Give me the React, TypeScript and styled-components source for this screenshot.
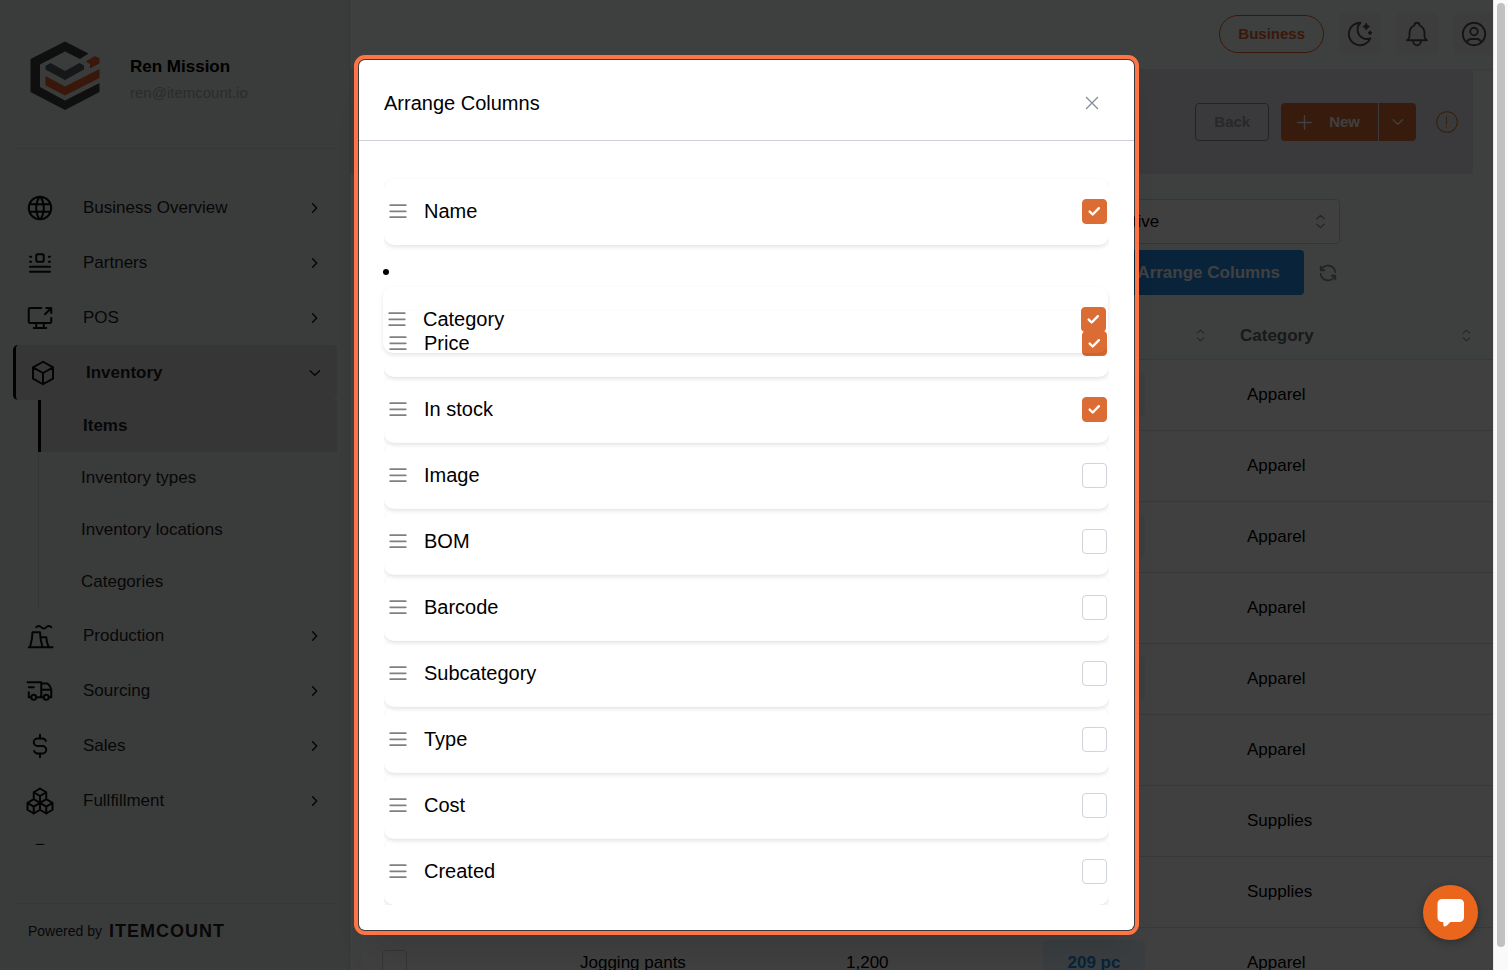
import React from 'react';
import styled, { createGlobalStyle } from 'styled-components';

const GlobalStyle = createGlobalStyle`
  *, *::before, *::after { box-sizing: border-box; }
  body {
    margin: 0;
    overflow: hidden;
    font-family: "Liberation Sans", Arial, Helvetica, sans-serif;
    font-size: 17px;
    line-height: 24px;
    color: #1c1f22;
  }
  button, input, select { font: inherit; color: inherit; }
  button { cursor: pointer; }
  a { color: inherit; text-decoration: none; }
  ul { list-style: none; margin: 0; padding: 0; }
  h1, h2, p { margin: 0; }
`;

/* ---------- icons ---------- */

type IconProps = { size?: number; stroke?: number; children: React.ReactNode };

const Svg = styled.svg`
  display: block;
  flex: none;
  fill: none;
  stroke: currentColor;
  stroke-linecap: round;
  stroke-linejoin: round;
`;

const Icon = ({ size = 30, stroke = 1.5, children }: IconProps) => (
  <Svg width={size} height={size} viewBox="0 0 24 24" strokeWidth={stroke} aria-hidden="true">
    {children}
  </Svg>
);

const paths = {
  world: 'M3 12a9 9 0 1 0 18 0a9 9 0 0 0 -18 0M3.6 9h16.8M3.6 15h16.8M11.5 3a17 17 0 0 0 0 18M12.5 3a17 17 0 0 1 0 18',
  partners:
    'M9 6a1 1 0 0 1 1 -1h4a1 1 0 0 1 1 1v4a1 1 0 0 1 -1 1h-4a1 1 0 0 1 -1 -1zM4 7h1M4 11h1M19 7h1M19 11h1M4 15h16M4 19h16',
  pos: 'M21 12v3a1 1 0 0 1 -1 1h-16a1 1 0 0 1 -1 -1v-10a1 1 0 0 1 1 -1h9M7 20h10M9 16v4M15 16v4M17 4h4v4M16 9l5 -5',
  box: 'M12 3l8 4.5v9l-8 4.5l-8 -4.5v-9l8 -4.5M12 12l8 -4.5M12 12v9M12 12l-8 -4.5',
  factory:
    'M4 21c1.147 -4.02 1.983 -8.027 2 -12h6c.017 3.973 .853 7.98 2 12M12.5 13h4.5c.025 2.612 .894 5.296 2 8M9 5a2.4 2.4 0 0 1 2 -1a2.4 2.4 0 0 1 2 1a2.4 2.4 0 0 0 2 1a2.4 2.4 0 0 0 2 -1a2.4 2.4 0 0 1 2 -1a2.4 2.4 0 0 1 2 1M3 21h19',
  truck:
    'M5 17a2 2 0 1 0 4 0a2 2 0 1 0 -4 0M15 17a2 2 0 1 0 4 0a2 2 0 1 0 -4 0M5 17h-2v-4m-1 -8h11v12m-4 0h6m4 0h2v-6h-8m0 -5h5c1.500 1.200 2.600 3 3 5M3 9h4',
  dollar: 'M16.7 8a3 3 0 0 0 -2.7 -2h-4a3 3 0 0 0 0 6h4a3 3 0 0 1 0 6h-4a3 3 0 0 1 -2.7 -2M12 3v3M12 18v3',
  packages:
    'M7 16.5l-5 -3l5 -3l5 3v5.5l-5 3zM2 13.5v5.5l5 3M7 16.545l5 -3.03M17 16.5l-5 -3l5 -3l5 3v5.5l-5 3zM12 19l5 3M17 16.5l5 -3M12 13.5v-5.5l-5 -3l5 -3l5 3v5.5M7 5.03v5.455M12 8l5 -3',
  coin: 'M3 12a9 9 0 1 0 18 0a9 9 0 0 0 -18 0',
  moon: 'M12 3c.132 0 .263 0 .393 0a7.5 7.5 0 0 0 7.92 12.446a9 9 0 1 1 -8.313 -12.454zM17 4a2 2 0 0 0 2 2a2 2 0 0 0 -2 2a2 2 0 0 0 -2 -2a2 2 0 0 0 2 -2M19 11h2m-1 -1v2',
  bell: 'M10 5a2 2 0 0 1 4 0a7 7 0 0 1 4 6v3a4 4 0 0 0 2 3h-16a4 4 0 0 0 2 -3v-3a7 7 0 0 1 4 -6M9 17v1a3 3 0 0 0 6 0v-1',
  user: 'M3 12a9 9 0 1 0 18 0a9 9 0 1 0 -18 0M9 10a3 3 0 1 0 6 0a3 3 0 1 0 -6 0M6.168 18.849a4 4 0 0 1 3.832 -2.849h4a4 4 0 0 1 3.834 2.855',
  refresh: 'M20 11a8.1 8.1 0 0 0 -15.5 -2m-.5 -4v4h4M4 13a8.1 8.1 0 0 0 15.5 2m.5 4v-4h-4',
};

const ChevronRight = () => (
  <Svg width="12" height="12" viewBox="0 0 12 12" strokeWidth="1.3" aria-hidden="true">
    <path d="M3.6 1.7L7.700 6L3.6 10.300" />
  </Svg>
);
const ChevronDown = () => (
  <Svg width="12" height="12" viewBox="0 0 12 12" strokeWidth="1.3" aria-hidden="true">
    <path d="M1 3.8L5.800 8.300L10.600 3.8" />
  </Svg>
);
const Sorter = ({ size = 15 }: { size?: number }) => (
  <Svg width={size} height={size} viewBox="0 0 15 15" strokeWidth="1.2" aria-hidden="true">
    <path d="M3.8 4.8L7.5 1.4L11.2 4.8M3.8 10.2L7.5 13.6L11.2 10.2" />
  </Svg>
);

/* ---------- shell ---------- */

const Shell = styled.div`
  display: grid;
  grid-template-columns: minmax(0, 1fr) 15px;
  height: 100vh;
`;
const Content = styled.div`
  position: relative;
  display: grid;
  grid-template-columns: 350px minmax(0, 1fr);
  min-height: 0;
  overflow: hidden;
  background: #f8fdfb;
`;
const ScrollTrack = styled.div`
  padding: 3px 3px 23px 3px;
  border-left: 1px solid #e8e8e8;
  background: #fafafa;
`;
const ScrollThumb = styled.div`
  width: 8px;
  height: 100%;
  border-radius: 4px;
  background: #c1c1c1;
`;

/* ---------- sidebar ---------- */

const Sidebar = styled.aside`
  display: flex;
  flex-direction: column;
  min-height: 0;
  padding: 0 12px 0 13px;
  border-right: 1px solid #d3d6d9;
  background: #e7e9ec;
`;
const Profile = styled.div`
  display: flex;
  align-items: center;
  gap: 30px;
  height: 149px;
  padding: 4px 0 0 17px;
  border-bottom: 1px solid #d6d9dc;
`;
const ProfileText = styled.div`
  padding-top: 8px;
`;
const ProfileName = styled.h2`
  font-size: 17px;
  line-height: 26px;
  color: #000;
`;
const ProfileMail = styled.p`
  font-size: 15px;
  line-height: 26px;
  color: #a9adb0;
`;
const Nav = styled.nav`
  flex: 1;
  min-height: 0;
  margin: 31px 0 58px;
  overflow: hidden;
`;
const NavLink = styled.a<{ $open?: boolean }>`
  display: flex;
  align-items: center;
  height: 55px;
  padding: 0 16px 0 12px;
  border-left: ${(p) => (p.$open ? '3px solid #000' : '0')};
  border-radius: 5px;
  background: ${(p) => (p.$open ? '#d6d8db' : 'transparent')};
  font-weight: ${(p) => (p.$open ? 700 : 400)};
  > svg { color: #0c0d0e; }
`;
const NavText = styled.span`
  flex: 1;
  padding-left: 28px;
`;
const SubList = styled.ul`
  margin-left: 25px;
`;
const SubLink = styled.a<{ $active?: boolean }>`
  display: flex;
  align-items: center;
  height: 52px;
  padding-left: 42px;
  border-left: ${(p) => (p.$active ? '3px solid #000' : '1px solid #cfd2d5')};
  background: ${(p) => (p.$active ? '#d6d8db' : 'transparent')};
  font-weight: ${(p) => (p.$active ? 700 : 400)};
`;
const Powered = styled.footer`
  display: flex;
  align-items: center;
  gap: 7px;
  height: 67px;
  padding: 0 0 12px 15px;
  border-top: 1px solid #d6d9dc;
  font-size: 14px;
`;
const Brand = styled.strong`
  font-size: 18px;
  letter-spacing: 1px;
`;

const Logo = () => (
  <svg width="70" height="70" viewBox="0 0 70 70" aria-hidden="true">
    <path d="M35 0.500L58.500 12.500L50 18L35 10.500L10 23.500V46L35 59.500L69.500 42V51L35 69L0.500 51V18Z" fill="#3c3f40" />
    <path d="M15.500 25L20.500 22L35 30L49.500 22L54 24.500V28.500L35 39L15.500 28.500Z" fill="#555b62" />
    <path d="M15.500 35L35 45.500L69.500 28V37L35 54.500L15.500 44.500Z" fill="#e2612c" />
    <path d="M55.500 20.500L65 15L69.500 17.500V22.500L60 27.500V23Z" fill="#e2612c" />
  </svg>
);

/* ---------- main ---------- */

const Main = styled.main`
  min-width: 0;
  overflow: hidden;
`;
const Topbar = styled.header`
  display: flex;
  justify-content: flex-end;
  align-items: center;
  gap: 15px;
  height: 70px;
  margin-right: -2px;
  padding-bottom: 2px;
  border-bottom: 1px solid #e4e8e8;
`;
const Pill = styled.button`
  height: 38px;
  padding: 0 18px;
  border: 1px solid #e4622c;
  border-radius: 19px;
  background: transparent;
  font-size: 15px;
  font-weight: 700;
  color: #e4622c;
`;
const Tile = styled.button`
  display: grid;
  place-items: center;
  width: 42px;
  height: 42px;
  padding: 0;
  border: 0;
  border-radius: 4px;
  background: #f3f3f3;
  color: #495057;
`;
const Band = styled.section`
  display: flex;
  justify-content: flex-end;
  align-items: center;
  height: 104px;
  margin-right: 20px;
  padding-right: 15px;
  background: #e6e8ed;
`;
const BackButton = styled.button`
  height: 38px;
  margin-right: 12px;
  padding: 0 18px;
  border: 1px solid #868c93;
  border-radius: 4px;
  background: transparent;
  font-size: 15px;
  font-weight: 700;
  color: #999fa6;
`;
const NewButton = styled.button`
  display: flex;
  align-items: center;
  gap: 17px;
  height: 38px;
  margin-right: 1px;
  padding: 0 18px 0 16px;
  border: 0;
  border-radius: 4px 0 0 4px;
  background: #db6c34;
  font-size: 15px;
  font-weight: 700;
  color: #fff;
`;
const NewMenuButton = styled.button`
  display: grid;
  place-items: center;
  width: 37px;
  height: 38px;
  margin-right: 20px;
  padding: 0;
  border: 0;
  border-radius: 0 4px 4px 0;
  background: #db6c34;
  color: #fff;
`;
const InfoButton = styled.button`
  padding: 0;
  border: 0;
  background: none;
  color: #d9822b;
`;
const Toolbar = styled.div`
  display: flex;
  flex-direction: column;
  align-items: flex-end;
  gap: 6px;
  margin: 25px 153px 18px 0;
`;
const SelectBox = styled.div`
  display: grid;
  align-items: center;
  width: 242px;
  > * { grid-area: 1 / 1; }
  > svg { justify-self: end; margin-right: 12px; color: #868e96; }
`;
const StatusSelect = styled.select`
  appearance: none;
  width: 100%;
  height: 45px;
  padding: 0 14px;
  border: 1px solid #ced4da;
  border-radius: 4px;
  background: #fff;
  color: #000;
`;
const Actions = styled.div`
  display: flex;
  align-items: center;
  gap: 12px;
`;
const ArrangeButton = styled.button`
  height: 45px;
  padding: 0 24px;
  border: 0;
  border-radius: 4px;
  background: #228be6;
  font-weight: 700;
  color: #fff;
`;
const RefreshButton = styled.button`
  display: grid;
  place-items: center;
  width: 24px;
  height: 24px;
  padding: 0;
  border: 0;
  background: none;
  color: #868e96;
`;

const TableArea = styled.div`
  padding-left: 12px;
`;
const Table = styled.table`
  width: 100%;
  border-collapse: collapse;
  table-layout: fixed;
`;
const Col = styled.col<{ $w?: number }>`
  width: ${(p) => (p.$w ? `${p.$w}px` : 'auto')};
`;
const Th = styled.th`
  height: 46px;
  padding: 0 20px 0 13px;
  border-bottom: 1px solid #dee2e6;
  text-align: left;
  color: #5f666d;
`;
const ThInner = styled.div`
  display: flex;
  align-items: center;
  justify-content: space-between;
  > svg { color: #868e96; }
`;
const Td = styled.td`
  height: 71px;
  padding: 0 20px;
  border-bottom: 1px solid #dee2e6;
  background: #fff;
  color: #000;
`;
const Badge = styled.span`
  display: flex;
  align-items: center;
  justify-content: center;
  width: 102px;
  height: 45px;
  border-radius: 6px;
  background: #e7f5ff;
  font-weight: 700;
  color: #228be6;
`;

/* ---------- modal ---------- */

const Overlay = styled.div`
  position: absolute;
  inset: 0;
  display: flex;
  justify-content: center;
  align-items: flex-start;
  padding-top: 60px;
  background: rgba(0, 0, 0, 0.75);
`;
const Modal = styled.section`
  width: 100%;
  max-width: 775px;
  border-radius: 6px;
  outline: 4px solid #ff7445;
  outline-offset: 1px;
  background: #fff;
  box-shadow: 0 1px 3px rgba(0, 0, 0, 0.05), 0 30px 30px -10px rgba(0, 0, 0, 0.1);
  color: #000;
`;
const ModalHeader = styled.header`
  display: flex;
  align-items: center;
  justify-content: space-between;
  height: 81px;
  padding: 5px 34px 0 25px;
  border-bottom: 1px solid #ced0d8;
`;
const ModalTitle = styled.h1`
  font-size: 20px;
  font-weight: 400;
`;
const CloseButton = styled.button`
  display: grid;
  place-items: center;
  width: 16px;
  height: 16px;
  padding: 0;
  border: 0;
  background: none;
  color: #868e9c;
`;
const ModalBody = styled.div`
  padding: 36px 25px 25px;
`;
const ListFrame = styled.div`
  position: relative;
`;
const ColumnList = styled.ul`
  padding-top: 2px;
  overflow: hidden;
`;
const Card = styled.div`
  display: flex;
  align-items: center;
  height: 66px;
  padding: 0 2px 2px 5px;
  border-radius: 10px;
  box-shadow: 0 2px 4px rgba(0, 0, 0, 0.11);
  font-size: 20px;
`;
const DragHandle = styled.button`
  display: grid;
  place-items: center;
  width: 18px;
  height: 18px;
  margin-right: 17px;
  padding: 0;
  border: 0;
  background: none;
  color: #808080;
  cursor: grab;
`;
const CardLabel = styled.label`
  flex: 1;
`;
const EmptySlot = styled.li`
  height: 66px;
`;
const Dragged = styled.div`
  position: absolute;
  top: 68px;
  left: -1px;
  width: 100%;
`;
const Bullet = styled.div`
  width: 6px;
  height: 6px;
  margin: 24px 0 12px;
  border-radius: 50%;
  background: #000;
`;
const CheckWrap = styled.span`
  display: grid;
  place-items: center;
  width: 25px;
  height: 25px;
  > * { grid-area: 1 / 1; }
  > svg { display: none; color: #fff; pointer-events: none; }
  > input:checked + svg { display: block; }
`;
const CheckInput = styled.input`
  appearance: none;
  width: 25px;
  height: 25px;
  margin: 0;
  border: 1px solid #ced4da;
  border-radius: 4px;
  background: #fff;
  &:checked { border-color: #db6c34; background: #db6c34; }
`;

const ChatButton = styled.button`
  position: absolute;
  right: 15px;
  bottom: 30px;
  display: grid;
  place-items: center;
  width: 55px;
  height: 55px;
  padding: 0;
  border: 0;
  border-radius: 50%;
  background: #eb661d;
  box-shadow: 0 2px 8px rgba(0, 0, 0, 0.3);
`;

const Check = ({ id, checked, label }: { id?: string; checked?: boolean; label?: string }) => (
  <CheckWrap>
    <CheckInput type="checkbox" id={id} defaultChecked={checked} aria-label={label} />
    <Svg width="13" height="11" viewBox="0 0 13 11" strokeWidth="2.4" aria-hidden="true">
      <path d="M1.700 5.600L4.700 8.500L10.900 2.200" />
    </Svg>
  </CheckWrap>
);

const ColumnCard = ({ name, checked }: { name: string; checked?: boolean }) => {
  const id = `column-${name.toLowerCase().replace(' ', '-')}`;
  return (
    <Card>
      <DragHandle type="button" aria-label={`Move ${name}`}>
        <Svg width="18" height="18" viewBox="0 0 18 18" strokeWidth="1.7" aria-hidden="true">
          <path d="M1.200 3.200H16.800M1.200 9.300H16.800M1.200 15.200H16.800" />
        </Svg>
      </DragHandle>
      <CardLabel htmlFor={id}>{name}</CardLabel>
      <Check id={id} checked={checked} />
    </Card>
  );
};

/* ---------- data ---------- */

type NavEntry = { label: string; icon: keyof typeof paths; children?: string[] };

const navEntries: NavEntry[] = [
  { label: 'Business Overview', icon: 'world' },
  { label: 'Partners', icon: 'partners' },
  { label: 'POS', icon: 'pos' },
  { label: 'Inventory', icon: 'box', children: ['Items', 'Inventory types', 'Inventory locations', 'Categories'] },
  { label: 'Production', icon: 'factory' },
  { label: 'Sourcing', icon: 'truck' },
  { label: 'Sales', icon: 'dollar' },
  { label: 'Fullfillment', icon: 'packages' },
];

type Item = { category: string; badge?: boolean; name?: string; price?: string; stock?: string };

const items: Item[] = [
  { category: 'Apparel', badge: true },
  { category: 'Apparel' },
  { category: 'Apparel', badge: true },
  { category: 'Apparel' },
  { category: 'Apparel', badge: true },
  { category: 'Apparel' },
  { category: 'Supplies' },
  { category: 'Supplies' },
  { category: 'Apparel', badge: true, name: 'Jogging pants', price: '1,200', stock: '209 pc' },
];

const columns = [
  { name: 'Name', checked: true },
  { name: 'Category', checked: true, dragging: true },
  { name: 'Price', checked: true },
  { name: 'In stock', checked: true },
  { name: 'Image' },
  { name: 'BOM' },
  { name: 'Barcode' },
  { name: 'Subcategory' },
  { name: 'Type' },
  { name: 'Cost' },
  { name: 'Created' },
];

export default function App() {
  return (
    <>
      <GlobalStyle />
      <Shell>
        <Content>
          <Sidebar>
            <Profile>
              <Logo />
              <ProfileText>
                <ProfileName>Ren Mission</ProfileName>
                <ProfileMail>ren@itemcount.io</ProfileMail>
              </ProfileText>
            </Profile>
            <Nav>
              <ul>
                {navEntries.map((entry) => (
                  <li key={entry.label}>
                    <NavLink href="#" $open={!!entry.children}>
                      <Icon stroke={1.6}>
                        <path d={paths[entry.icon]} />
                      </Icon>
                      <NavText>{entry.label}</NavText>
                      {entry.children ? <ChevronDown /> : <ChevronRight />}
                    </NavLink>
                    {entry.children && (
                      <SubList>
                        {entry.children.map((child, i) => (
                          <li key={child}>
                            <SubLink href="#" $active={i === 0}>
                              {child}
                            </SubLink>
                          </li>
                        ))}
                      </SubList>
                    )}
                  </li>
                ))}
                <li>
                  <NavLink href="#" aria-label="More">
                    <Icon stroke={1.6}>
                      <path d={paths.coin} />
                    </Icon>
                  </NavLink>
                </li>
              </ul>
            </Nav>
            <Powered>
              Powered by <Brand>ITEMCOUNT</Brand>
            </Powered>
          </Sidebar>

          <Main>
            <Topbar>
              <Pill type="button">Business</Pill>
              <Tile type="button" aria-label="Dark mode">
                <Icon><path d={paths.moon} /></Icon>
              </Tile>
              <Tile type="button" aria-label="Notifications">
                <Icon><path d={paths.bell} /></Icon>
              </Tile>
              <Tile type="button" aria-label="Account">
                <Icon><path d={paths.user} /></Icon>
              </Tile>
            </Topbar>
            <Band>
              <BackButton type="button">Back</BackButton>
              <NewButton type="button">
                <Svg width="15" height="15" viewBox="0 0 15 15" strokeWidth="1.4" aria-hidden="true">
                  <path d="M7.500 0.800V14.200M0.800 7.500H14.200" />
                </Svg>
                New
              </NewButton>
              <NewMenuButton type="button" aria-label="More options">
                <ChevronDown />
              </NewMenuButton>
              <InfoButton type="button" aria-label="Information">
                <Svg width="22" height="22" viewBox="0 0 22 22" strokeWidth="1.100" aria-hidden="true">
                  <circle cx="11" cy="11" r="10.300" />
                  <path d="M10.500 6V13M10.500 15.500V16" />
                </Svg>
              </InfoButton>
            </Band>
            <Toolbar>
              <SelectBox>
                <StatusSelect aria-label="Status" defaultValue="Active">
                  <option>Active</option>
                </StatusSelect>
                <Sorter />
              </SelectBox>
              <Actions>
                <ArrangeButton type="button">Arrange Columns</ArrangeButton>
                <RefreshButton type="button" aria-label="Refresh">
                  <Icon size={22} stroke={2}><path d={paths.refresh} /></Icon>
                </RefreshButton>
              </Actions>
            </Toolbar>
            <TableArea>
              <Table>
                <colgroup>
                  <Col $w={198} />
                  <Col $w={266} />
                  <Col $w={197} />
                  <Col $w={204} />
                  <Col />
                </colgroup>
                <thead>
                  <tr>
                    <Th />
                    <Th />
                    <Th />
                    <Th>
                      <ThInner>
                        <span />
                        <Sorter size={13} />
                      </ThInner>
                    </Th>
                    <Th>
                      <ThInner>
                        Category
                        <Sorter size={13} />
                      </ThInner>
                    </Th>
                  </tr>
                </thead>
                <tbody>
                  {items.map((item, i) => (
                    <tr key={i}>
                      <Td>
                        <Check label="Select row" />
                      </Td>
                      <Td>{item.name}</Td>
                      <Td>{item.price}</Td>
                      <Td>{item.badge && <Badge>{item.stock}</Badge>}</Td>
                      <Td>{item.category}</Td>
                    </tr>
                  ))}
                </tbody>
              </Table>
            </TableArea>
          </Main>

          <Overlay>
            <Modal role="dialog" aria-labelledby="modal-title">
              <ModalHeader>
                <ModalTitle id="modal-title">Arrange Columns</ModalTitle>
                <CloseButton type="button" aria-label="Close">
                  <Svg width="14" height="14" viewBox="0 0 14 14" strokeWidth="1.400" aria-hidden="true">
                    <path d="M1.500 1.500L12.500 12.500M12.500 1.500L1.500 12.500" />
                  </Svg>
                </CloseButton>
              </ModalHeader>
              <ModalBody>
                <ListFrame>
                  <ColumnList>
                    {columns.map((c) =>
                      c.dragging ? (
                        <EmptySlot key={c.name}>
                          <Dragged>
                            <Bullet />
                            <ColumnCard name={c.name} checked={c.checked} />
                          </Dragged>
                        </EmptySlot>
                      ) : (
                        <li key={c.name}>
                          <ColumnCard name={c.name} checked={c.checked} />
                        </li>
                      ),
                    )}
                  </ColumnList>
                </ListFrame>
              </ModalBody>
            </Modal>
          </Overlay>

          <ChatButton type="button" aria-label="Open chat">
            <svg width="29" height="29" viewBox="0 0 29 29" aria-hidden="true">
              <path
                d="M6 1H23.500A4.500 4.500 0 0 1 28 5.500V19.500A4.500 4.500 0 0 1 23.500 24H14.500C12 26 11 28.500 8.500 28.500C7.500 28.500 7.300 27 7.300 24H6A4.500 4.500 0 0 1 1.500 19.500V5.500A4.500 4.500 0 0 1 6 1Z"
                fill="#fff"
              />
            </svg>
          </ChatButton>
        </Content>
        <ScrollTrack>
          <ScrollThumb />
        </ScrollTrack>
      </Shell>
    </>
  );
}
